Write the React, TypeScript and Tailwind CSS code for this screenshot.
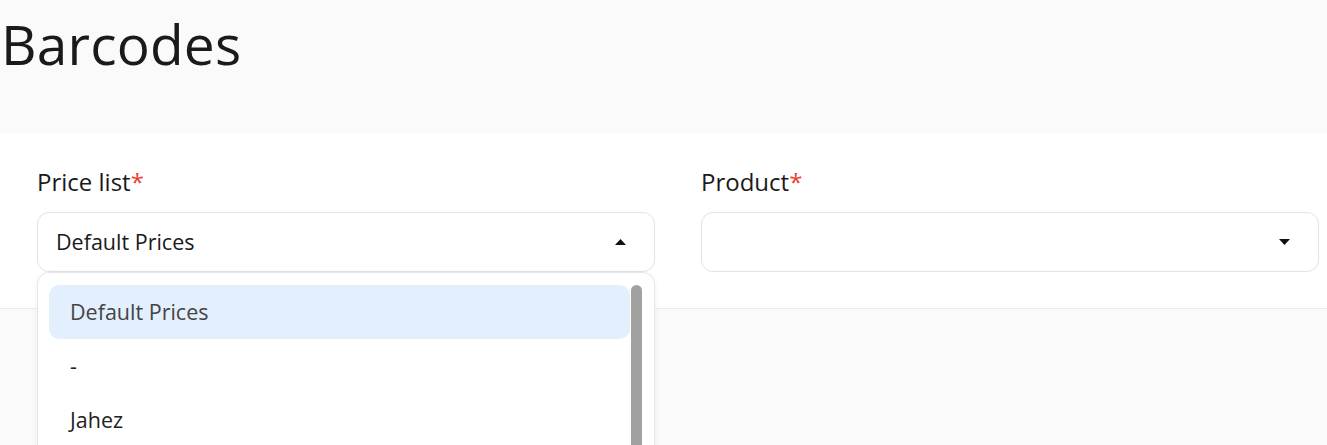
import { useState } from 'react';

const priceLists = ['Default Prices', '-', 'Jahez', 'HungerStation'];

const Caret = ({ up }: { up?: boolean }) => (
  <svg width="11" height="6" viewBox="0 0 11 6" className={up ? '' : 'rotate-180'}>
    <path d="M5.5 0L11 6H0z" fill="#111" />
  </svg>
);

export default function App() {
  const [selected, setSelected] = useState(priceLists[0]);

  return (
    <div className="min-h-[445px] bg-[#fafafa] font-['Open_Sans',sans-serif] text-[#1a1a1a] overflow-hidden">
      {/* Header */}
      <div className="h-[133px] pt-[6px]">
        <h1 className="text-[55px] leading-[76px] font-normal tracking-[0.2px] pl-[1px]">Barcodes</h1>
      </div>

      {/* Form card */}
      <div className="bg-white border-b border-[#ececec] h-[176px] pl-[37px] pt-[33px] flex gap-[46px]">
        <div className="w-[618px] relative">
          <label className="block text-[24px] leading-[32px] mb-[14px]">
            Price list<span className="text-[#f03b2f]">*</span>
          </label>
          <button className="w-full h-[60px] rounded-[12px] border border-[#e3e3e3] bg-white flex items-center justify-between pl-[18px] pr-[28px] text-[21.5px] text-[#1a1a1a]">
            <span>{selected}</span>
            <Caret up />
          </button>

          {/* Open menu */}
          <div className="absolute left-0 top-[106px] w-[618px] h-[200px] rounded-[12px] border border-[#e6e6e6] bg-white shadow-[0_2px_6px_rgba(0,0,0,0.06)] pt-[12px] pl-[11px] pr-[12px] flex gap-[1px] z-10">
            <ul className="flex-1">
              {priceLists.map((p) => (
                <li
                  key={p}
                  onClick={() => setSelected(p)}
                  className={
                    p === selected
                      ? 'h-[54px] rounded-[10px] bg-[#e3effd] flex items-center pl-[21px] text-[21.5px] text-[#444] cursor-pointer'
                      : 'h-[54px] rounded-[10px] flex items-center pl-[21px] text-[21.5px] text-[#222] cursor-pointer'
                  }
                >
                  {p}
                </li>
              ))}
            </ul>
            <div className="w-[11px] h-[190px] rounded-full bg-[#a1a1a1]" />
          </div>
        </div>

        <div className="w-[618px]">
          <label className="block text-[24px] leading-[32px] mb-[14px]">
            Product<span className="text-[#f03b2f]">*</span>
          </label>
          <button className="w-full h-[60px] rounded-[12px] border border-[#e3e3e3] bg-white flex items-center justify-end pr-[28px]">
            <Caret />
          </button>
        </div>
      </div>
    </div>
  );
}
